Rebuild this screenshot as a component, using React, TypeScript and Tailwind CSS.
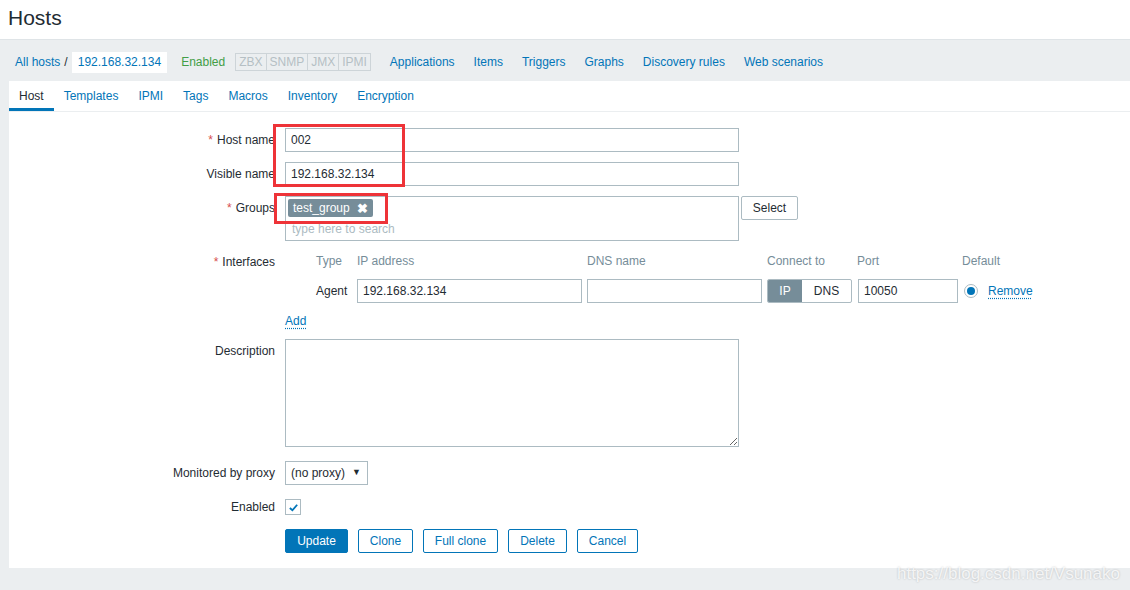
import React from "react";

const navLinks = ["Applications", "Items", "Triggers", "Graphs", "Discovery rules", "Web scenarios"];
const tabs = ["Host", "Templates", "IPMI", "Tags", "Macros", "Inventory", "Encryption"];
const statuses = ["ZBX", "SNMP", "JMX", "IPMI"];

function Label({ text, required }: { text: string; required?: boolean }) {
  return (
    <div className="w-[276px] shrink-0 pr-[10px] text-right leading-[24px]">
      {required && <span className="mr-[4px] text-[#d64e4e]">*</span>}
      {text}
    </div>
  );
}

const input = "h-[24px] border border-[#acbbc2] bg-white px-[5px] text-[12px] text-[#1f2c33] outline-none";

export default function App() {
  return (
    <div className="relative h-[590px] w-[1130px] overflow-hidden bg-[#ebeef0] font-['Liberation_Sans',Arial,sans-serif] text-[12px] text-[#1f2c33]">
      {/* header */}
      <header className="flex h-[40px] items-center border-b border-[#dfe4e7] bg-white pb-[4px] pl-[8px]">
        <h1 className="text-[21px] leading-none">Hosts</h1>
      </header>

      {/* breadcrumbs + host nav */}
      <nav className="flex h-[41px] items-center pl-[15px] pt-[3px]">
        <a className="text-[#0275b8]">All hosts</a>
        <span className="mx-[4px] text-[#1f2c33]">/</span>
        <span className="bg-white px-[6px] py-[3px] leading-[15px] text-[#0275b8]">192.168.32.134</span>
        <span className="ml-[14px] text-[#429e47]">Enabled</span>
        <div className="ml-[10px] flex h-[18px] border border-[#cdd4d8]">
          {statuses.map((s, i) => (
            <span
              key={s}
              className={`flex items-center px-[3px] text-[#b5bfc4] ${i > 0 ? "border-l border-[#cdd4d8]" : ""}`}
            >
              {s}
            </span>
          ))}
        </div>
        <div className="ml-[19px] flex gap-[19px] text-[#0275b8]">
          {navLinks.map((l) => (
            <a key={l}>{l}</a>
          ))}
        </div>
      </nav>

      {/* panel */}
      <div className="ml-[9px] h-[487px] bg-white">
        <div className="flex h-[31px] border-b border-[#ebeef0]">
          {tabs.map((t, i) => (
            <div
              key={t}
              className={`flex items-center px-[10px] ${i === 0 ? "border-b-[3px] border-[#0275b8] pt-[3px] text-[#1f2c33]" : "text-[#0275b8]"}`}
            >
              {t}
            </div>
          ))}
        </div>

        <div className="pt-[16px]">
          <div className="flex">
            <Label text="Host name" required />
            <input className={`${input} w-[454px]`} defaultValue="002" />
          </div>
          <div className="mt-[10px] flex">
            <Label text="Visible name" />
            <input className={`${input} w-[454px]`} defaultValue="192.168.32.134" />
          </div>
          <div className="mt-[10px] flex">
            <Label text="Groups" required />
            <div className="h-[45px] w-[454px] border border-[#acbbc2] px-[2px] pt-[2px]">
              <span className="inline-flex h-[18px] items-center gap-[7px] rounded-[2px] bg-[#768d99] px-[5px] text-white">
                test_group
                <span className="text-[13px] font-bold leading-none">✖</span>
              </span>
              <div className="mt-[3px] pl-[4px] text-[#acbbc2]">type here to search</div>
            </div>
            <button className="ml-[2px] h-[24px] w-[57px] rounded-[2px] border border-[#acbbc2] bg-white text-[#1f2c33]">
              Select
            </button>
          </div>

          {/* interfaces */}
          <div className="mt-[9px] flex">
            <Label text="Interfaces" required />
            <div>
              <div className="flex h-[22px] items-center text-[#768d99]">
                <span className="ml-[31px] w-[41px]">Type</span>
                <span className="w-[230px]">IP address</span>
                <span className="w-[180px]">DNS name</span>
                <span className="w-[90px]">Connect to</span>
                <span className="w-[105px]">Port</span>
                <span>Default</span>
              </div>
              <div className="mt-[7px] flex items-center">
                <span className="ml-[31px] w-[41px]">Agent</span>
                <input className={`${input} w-[225px]`} defaultValue="192.168.32.134" />
                <input className={`${input} ml-[5px] w-[175px]`} />
                <div className="ml-[5px] flex h-[24px] overflow-hidden rounded-[2px] border border-[#acbbc2]">
                  <span className="flex w-[34px] items-center justify-center bg-[#768d99] text-white">IP</span>
                  <span className="flex w-[49px] items-center justify-center">DNS</span>
                </div>
                <input className={`${input} ml-[6px] w-[100px]`} defaultValue="10050" />
                <span className="ml-[6px] flex h-[14px] w-[14px] items-center justify-center rounded-full border border-[#acbbc2]">
                  <span className="h-[8px] w-[8px] rounded-full bg-[#0275b8]" />
                </span>
                <a className="ml-[10px] text-[#0275b8] underline decoration-dotted underline-offset-[3px]">Remove</a>
              </div>
              <div className="mt-[8px] h-[20px] leading-[20px]">
                <a className="text-[#0275b8] underline decoration-dotted underline-offset-[3px]">Add</a>
              </div>
            </div>
          </div>

          <div className="mt-[8px] flex">
            <Label text="Description" />
            <textarea className="h-[108px] w-[454px] border border-[#acbbc2] outline-none" />
          </div>

          <div className="mt-[14px] flex">
            <Label text="Monitored by proxy" />
            <div className={`${input} flex w-[83px] items-center justify-between pr-[6px]`}>
              <span>(no proxy)</span>
              <span className="text-[9px]">▼</span>
            </div>
          </div>

          <div className="mt-[10px] flex items-center">
            <Label text="Enabled" />
            <span className="flex h-[16px] w-[16px] items-center justify-center border border-[#acbbc2]">
              <svg viewBox="0 0 12 12" className="h-[11px] w-[11px]">
                <path d="M2 6.5 L4.8 9 L10 3" fill="none" stroke="#0275b8" strokeWidth="2" />
              </svg>
            </span>
          </div>

          <div className="mt-[10px] flex">
            <div className="w-[276px] shrink-0" />
            <div className="flex gap-[10px]">
              <button className="h-[24px] w-[63px] rounded-[2px] border border-[#0275b8] bg-[#0275b8] text-white">Update</button>
              <button className="h-[24px] w-[55px] rounded-[2px] border border-[#0275b8] bg-white text-[#0275b8]">Clone</button>
              <button className="h-[24px] w-[75px] rounded-[2px] border border-[#0275b8] bg-white text-[#0275b8]">Full clone</button>
              <button className="h-[24px] w-[59px] rounded-[2px] border border-[#0275b8] bg-white text-[#0275b8]">Delete</button>
              <button className="h-[24px] w-[61px] rounded-[2px] border border-[#0275b8] bg-white text-[#0275b8]">Cancel</button>
            </div>
          </div>
        </div>
      </div>

      {/* annotation boxes */}
      <div className="absolute left-[273px] top-[124px] h-[63px] w-[132px] border-[3px] border-[#ee3338]" />
      <div className="absolute left-[274px] top-[193px] h-[31px] w-[114px] border-[3px] border-[#ee3338]" />

      {/* watermark */}
      <div className="absolute right-[10px] top-[561px] text-[17px] text-white/80 [text-shadow:0_0_2px_rgba(0,0,0,0.25)]">
        https://blog.csdn.net/Vsunako
      </div>
    </div>
  );
}
